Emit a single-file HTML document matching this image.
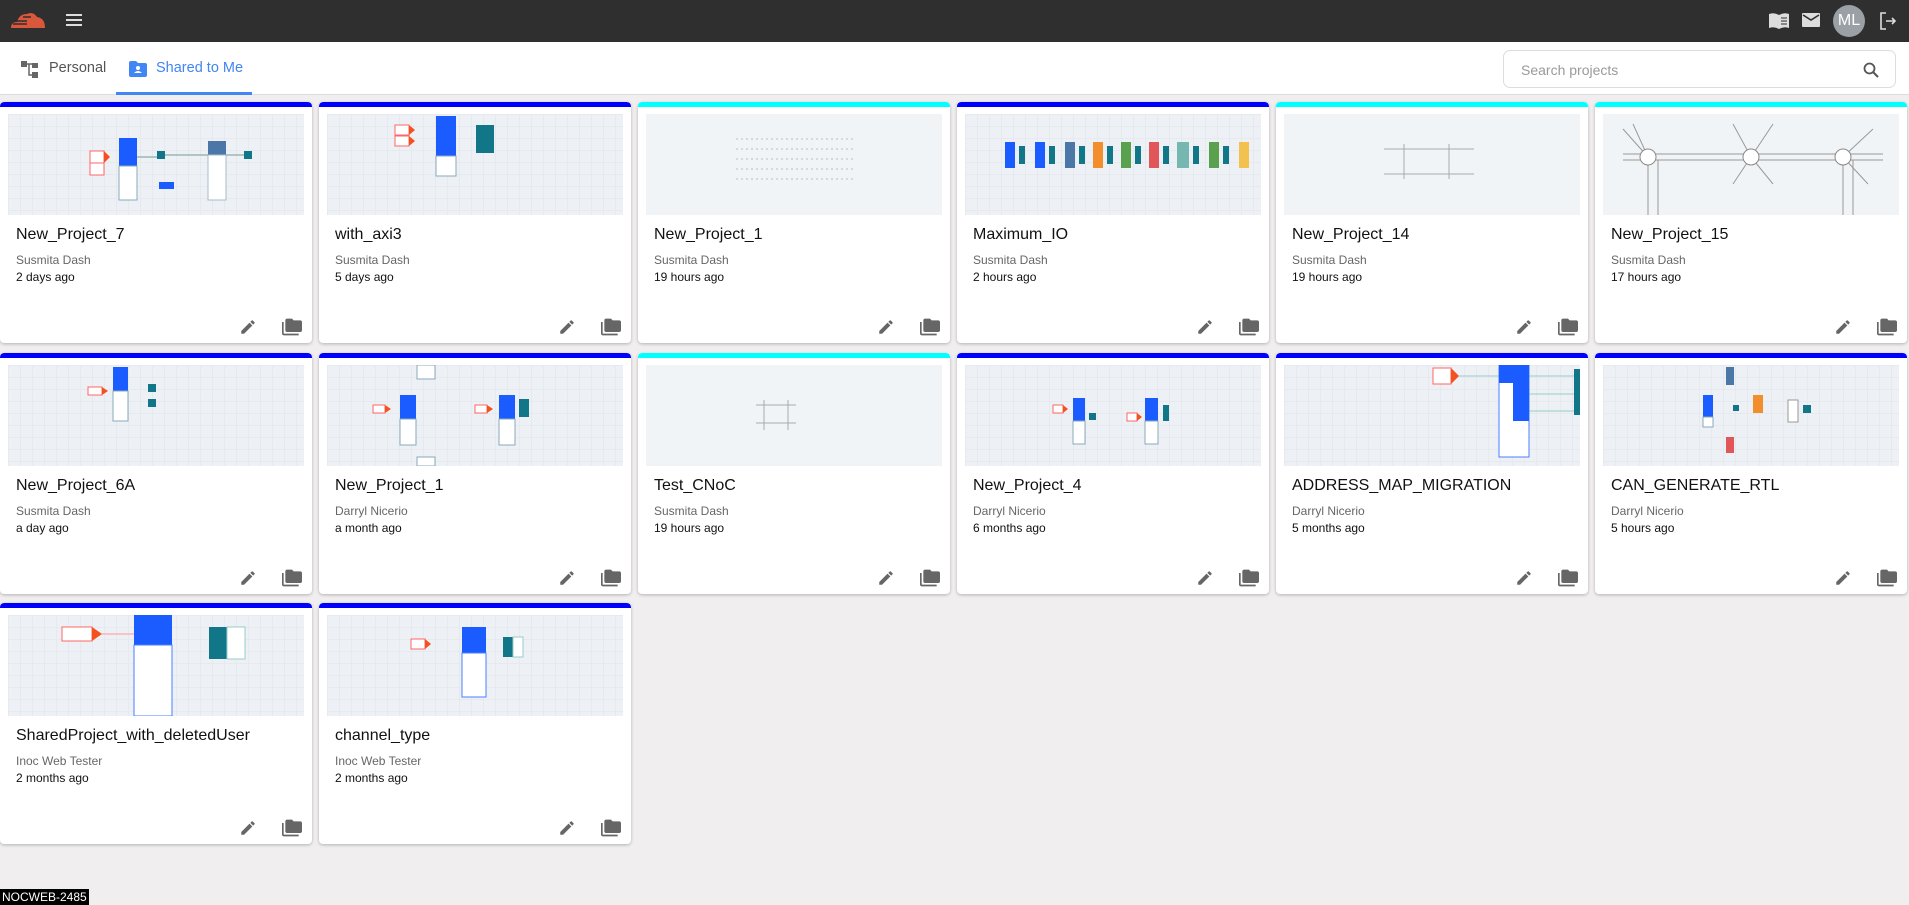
<!DOCTYPE html>
<html><head><meta charset="utf-8"><style>
*{box-sizing:border-box;margin:0;padding:0}
body{width:1909px;height:905px;overflow:hidden;background:#f0eeee;font-family:"Liberation Sans",Arial,sans-serif;position:relative}
.top{position:absolute;left:0;top:0;width:1909px;height:42px;background:#2f2f2f}
.tabs{position:absolute;left:0;top:42px;width:1909px;height:53px;background:#fff;border-bottom:1px solid #ddd}
.tab{position:absolute;top:18px;font-size:14.5px;color:#555}
.card{position:absolute;width:312px;height:241px;background:#fff;border-radius:4px;box-shadow:0 1px 3px rgba(0,0,0,.25);overflow:hidden}
.bar{position:absolute;left:0;top:0;right:0;height:5px;border-radius:4px 4px 0 0}
.b{background:#0000ff}.c{background:#00ffff}
.th{position:absolute;left:8px;top:12px;width:296px;height:101px;background:#edf0f4;background-image:linear-gradient(#e6e9ee 1px,transparent 1px),linear-gradient(90deg,#e6e9ee 1px,transparent 1px);background-size:12px 12px}
.th svg{position:absolute;left:0;top:0}
.t{position:absolute;left:16px;top:124px;font-size:16px;color:#111}
.a{position:absolute;left:16px;top:151px;font-size:12px;color:#666}
.d{position:absolute;left:16px;top:168px;font-size:12px;color:#111}
</style></head><body>
<div class="top">
<svg style="position:absolute;left:9px;top:10px" width="38" height="20" viewBox="0 0 38 20"><path d="M2 18 Q2 12 8 12 Q10 4 18 4 Q24 1 28 7 Q36 8 36 18 Z" fill="#d9573a"/><path d="M4 14h14M6 11h12M14 7h8" stroke="#2f2f2f" stroke-width="1.5"/></svg>
<svg style="position:absolute;left:66px;top:13px" width="16" height="14"><path d="M0 2h16M0 7h16M0 12h16" stroke="#ddd" stroke-width="2"/></svg>
<svg style="position:absolute;left:1768px;top:12px" width="22" height="18" viewBox="0 0 22 18"><path d="M1 2q5-2 10 1q5-3 10-1v14q-5-2-10 1q-5-3-10-1z" fill="#ddd"/><path d="M13 6h6M13 9h6M13 12h6" stroke="#2f2f2f" stroke-width="1"/></svg>
<svg style="position:absolute;left:1802px;top:13px" width="18" height="14"><rect width="18" height="14" rx="1" fill="#ddd"/><path d="M1 2l8 5 8-5" stroke="#2f2f2f" stroke-width="1.6" fill="none"/></svg>
<div style="position:absolute;left:1833px;top:5px;width:32px;height:32px;border-radius:50%;background:#9aa0a6;color:#fff;font-size:16px;line-height:32px;text-align:center">ML</div>
<svg style="position:absolute;left:1879px;top:12px" width="18" height="18"><path d="M7 1H2v16h5M7 9h9M13 6l3 3-3 3" stroke="#ddd" stroke-width="1.6" fill="none"/></svg>
</div>
<div class="tabs">
<svg style="position:absolute;left:21px;top:19px" width="19" height="17"><rect x="0" y="0" width="6" height="6" fill="#666"/><rect x="11" y="2" width="6" height="5" fill="#666"/><rect x="11" y="11" width="6" height="6" fill="#666"/><path d="M6 3h5M8 3v11h3" stroke="#666" stroke-width="1.5" fill="none"/></svg>
<div class="tab" style="left:49px">Personal</div>
<svg style="position:absolute;left:129px;top:19px" width="18" height="16"><path d="M0 2q0-2 2-2h5l2 2h7q2 0 2 2v10q0 2-2 2H2q-2 0-2-2z" fill="#4285f4"/><circle cx="9" cy="7" r="2" fill="#fff"/><path d="M5 12q4-4 8 0z" fill="#fff"/></svg>
<div class="tab" style="left:156px;color:#4285f4">Shared to Me</div>
<div style="position:absolute;left:116px;top:50px;width:136px;height:3px;background:#4285f4"></div>
<div style="position:absolute;left:1503px;top:8px;width:393px;height:38px;border:1px solid #ddd;border-radius:7px;background:#fff">
<span style="position:absolute;left:17px;top:11px;font-size:14px;color:#9a9a9a">Search projects</span>
<svg style="position:absolute;right:16px;top:11px" width="16" height="16"><circle cx="6.5" cy="6.5" r="5" stroke="#555" stroke-width="1.8" fill="none"/><path d="M10 10l5 5" stroke="#555" stroke-width="2"/></svg>
</div>
</div>

<div class="card" style="left:0;top:102px"><div class="bar b"></div><div class="th"><svg width="296" height="101"><rect x="82" y="37" width="14" height="14" fill="#fff" stroke="#f66"/><path d="M96 37l6 6-6 6z" fill="#f4511e"/><rect x="82" y="49" width="14" height="12" fill="#fff" stroke="#f66"/><rect x="111" y="24" width="18" height="28" fill="#1a5cff"/><rect x="111" y="52" width="18" height="34" fill="#fff" stroke="#8ab"/><rect x="149" y="37" width="8" height="8" fill="#178"/><rect x="200" y="27" width="18" height="14" fill="#4a76a8"/><rect x="200" y="41" width="18" height="45" fill="#fff" stroke="#abc"/><rect x="236" y="37" width="8" height="8" fill="#178"/><rect x="151" y="68" width="15" height="7" fill="#1a5cff"/><path d="M129 43h20M157 41h43M218 41h18" stroke="#799" /></svg></div><div class="t">New_Project_7</div><div class="a">Susmita Dash</div><div class="d">2 days ago</div></div>
<div class="card" style="left:319px;top:102px"><div class="bar b"></div><div class="th"><svg width="296" height="101"><rect x="68" y="11" width="14" height="10" fill="#fff" stroke="#f66"/><path d="M82 11l6 5-6 5z" fill="#f4511e"/><rect x="68" y="22" width="14" height="10" fill="#fff" stroke="#f66"/><path d="M82 22l6 5-6 5z" fill="#f4511e"/><rect x="109" y="2" width="20" height="40" fill="#1a5cff"/><rect x="109" y="42" width="20" height="20" fill="#fff" stroke="#8ab"/><rect x="149" y="11" width="18" height="28" fill="#178"/></svg></div><div class="t">with_axi3</div><div class="a">Susmita Dash</div><div class="d">5 days ago</div></div>
<div class="card" style="left:638px;top:102px"><div class="bar c"></div><div class="th" style="background:#f1f4f7"><svg width="296" height="101"><g stroke="#bbb" stroke-dasharray="2 3"><path d="M90 25h120M90 35h120M90 45h120M90 55h120M90 65h120"/></g></svg></div><div class="t">New_Project_1</div><div class="a">Susmita Dash</div><div class="d">19 hours ago</div></div>
<div class="card" style="left:957px;top:102px"><div class="bar b"></div><div class="th"><svg width="296" height="101"><rect x="40" y="28" width="10" height="26" fill="#1a5cff"/><rect x="54" y="32" width="6" height="18" fill="#178"/><rect x="70" y="28" width="10" height="26" fill="#1a5cff"/><rect x="84" y="32" width="6" height="18" fill="#178"/><rect x="100" y="28" width="10" height="26" fill="#4a76a8"/><rect x="114" y="32" width="6" height="18" fill="#178"/><rect x="128" y="28" width="10" height="26" fill="#f28e2b"/><rect x="142" y="32" width="6" height="18" fill="#178"/><rect x="156" y="28" width="10" height="26" fill="#59a14f"/><rect x="170" y="32" width="6" height="18" fill="#178"/><rect x="184" y="28" width="10" height="26" fill="#e15759"/><rect x="198" y="32" width="6" height="18" fill="#178"/><rect x="212" y="28" width="12" height="26" fill="#76b7b2"/><rect x="228" y="32" width="6" height="18" fill="#178"/><rect x="244" y="28" width="10" height="26" fill="#59a14f"/><rect x="258" y="32" width="6" height="18" fill="#178"/><rect x="274" y="28" width="10" height="26" fill="#f2c14e"/></svg></div><div class="t">Maximum_IO</div><div class="a">Susmita Dash</div><div class="d">2 hours ago</div></div>
<div class="card" style="left:1276px;top:102px"><div class="bar c"></div><div class="th" style="background:#f1f4f7"><svg width="296" height="101"><g stroke="#aaa" fill="none"><path d="M100 35h90M100 60h90M120 30v35M165 30v35"/></g></svg></div><div class="t">New_Project_14</div><div class="a">Susmita Dash</div><div class="d">19 hours ago</div></div>
<div class="card" style="left:1595px;top:102px"><div class="bar c"></div><div class="th" style="background:#f1f4f7"><svg width="296" height="101"><g stroke="#999" fill="none"><path d="M20 40h260M20 46h260M45 46v55M55 46v55M240 46v55M250 46v55"/><path d="M45 43L20 15M45 43L30 10M240 43L270 15M240 43L265 70M148 43L130 10M148 43L170 10M148 43L130 70M148 43L170 70"/></g><circle cx="45" cy="43" r="8" fill="#fff" stroke="#888"/><circle cx="148" cy="43" r="8" fill="#fff" stroke="#888"/><circle cx="240" cy="43" r="8" fill="#fff" stroke="#888"/></svg></div><div class="t">New_Project_15</div><div class="a">Susmita Dash</div><div class="d">17 hours ago</div></div>

<div class="card" style="left:0;top:353px"><div class="bar b"></div><div class="th"><svg width="296" height="101"><rect x="80" y="22" width="14" height="8" fill="#fff" stroke="#f66"/><path d="M94 22l6 4-6 4z" fill="#f4511e"/><rect x="105" y="2" width="15" height="24" fill="#1a5cff"/><rect x="105" y="26" width="15" height="30" fill="#fff" stroke="#8ab"/><rect x="140" y="19" width="8" height="8" fill="#178"/><rect x="140" y="34" width="8" height="8" fill="#178"/></svg></div><div class="t">New_Project_6A</div><div class="a">Susmita Dash</div><div class="d">a day ago</div></div>
<div class="card" style="left:319px;top:353px"><div class="bar b"></div><div class="th"><svg width="296" height="101"><rect x="90" y="0" width="18" height="14" fill="#fff" stroke="#8ab"/><rect x="90" y="92" width="18" height="9" fill="#fff" stroke="#8ab"/><rect x="46" y="40" width="12" height="8" fill="#fff" stroke="#f66"/><path d="M58 40l6 4-6 4z" fill="#f4511e"/><rect x="73" y="30" width="16" height="24" fill="#1a5cff"/><rect x="73" y="54" width="16" height="26" fill="#fff" stroke="#8ab"/><rect x="148" y="40" width="12" height="8" fill="#fff" stroke="#f66"/><path d="M160 40l6 4-6 4z" fill="#f4511e"/><rect x="172" y="30" width="16" height="24" fill="#1a5cff"/><rect x="172" y="54" width="16" height="26" fill="#fff" stroke="#8ab"/><rect x="192" y="34" width="10" height="18" fill="#178"/></svg></div><div class="t">New_Project_1</div><div class="a">Darryl Nicerio</div><div class="d">a month ago</div></div>
<div class="card" style="left:638px;top:353px"><div class="bar c"></div><div class="th" style="background:#f1f4f7"><svg width="296" height="101"><g stroke="#aaa" fill="none"><path d="M110 40h40M110 58h40M118 35v30M142 35v30"/></g></svg></div><div class="t">Test_CNoC</div><div class="a">Susmita Dash</div><div class="d">19 hours ago</div></div>
<div class="card" style="left:957px;top:353px"><div class="bar b"></div><div class="th"><svg width="296" height="101"><rect x="88" y="40" width="10" height="8" fill="#fff" stroke="#f66"/><path d="M98 40l5 4-5 4z" fill="#f4511e"/><rect x="108" y="33" width="12" height="23" fill="#1a5cff"/><rect x="108" y="56" width="12" height="23" fill="#fff" stroke="#8ab"/><rect x="124" y="48" width="7" height="7" fill="#178"/><rect x="162" y="48" width="10" height="8" fill="#fff" stroke="#f66"/><path d="M172 48l5 4-5 4z" fill="#f4511e"/><rect x="180" y="33" width="13" height="23" fill="#1a5cff"/><rect x="180" y="56" width="13" height="23" fill="#fff" stroke="#8ab"/><rect x="198" y="40" width="6" height="16" fill="#178"/></svg></div><div class="t">New_Project_4</div><div class="a">Darryl Nicerio</div><div class="d">6 months ago</div></div>
<div class="card" style="left:1276px;top:353px"><div class="bar b"></div><div class="th"><svg width="296" height="101"><rect x="149" y="3" width="18" height="16" fill="#fff" stroke="#f66"/><path d="M167 3l8 8-8 8z" fill="#f4511e"/><path d="M175 11h40M244 11h50M244 29h50M244 46h50" stroke="#9cc"/><rect x="215" y="0" width="30" height="92" fill="#fff" stroke="#4a7eff"/><rect x="229" y="0" width="16" height="56" fill="#1a5cff"/><rect x="215" y="0" width="14" height="18" fill="#1a5cff"/><rect x="290" y="4" width="6" height="46" fill="#178"/></svg></div><div class="t">ADDRESS_MAP_MIGRATION</div><div class="a">Darryl Nicerio</div><div class="d">5 months ago</div></div>
<div class="card" style="left:1595px;top:353px"><div class="bar b"></div><div class="th"><svg width="296" height="101"><rect x="100" y="30" width="10" height="22" fill="#1a5cff"/><rect x="100" y="52" width="10" height="10" fill="#fff" stroke="#8ab"/><rect x="123" y="2" width="8" height="18" fill="#4a76a8"/><rect x="150" y="30" width="10" height="18" fill="#f28e2b"/><rect x="123" y="72" width="8" height="16" fill="#e15759"/><rect x="185" y="35" width="10" height="22" fill="#fff" stroke="#999"/><rect x="200" y="40" width="8" height="8" fill="#178"/><rect x="130" y="40" width="6" height="6" fill="#178"/></svg></div><div class="t">CAN_GENERATE_RTL</div><div class="a">Darryl Nicerio</div><div class="d">5 hours ago</div></div>

<div class="card" style="left:0;top:603px"><div class="bar b"></div><div class="th"><svg width="296" height="101"><rect x="54" y="12" width="30" height="14" fill="#fff" stroke="#f66"/><path d="M84 12l10 7-10 7z" fill="#f4511e"/><path d="M94 19h42" stroke="#f99"/><rect x="126" y="0" width="38" height="30" fill="#1a5cff"/><rect x="126" y="30" width="38" height="71" fill="#fff" stroke="#4a7eff"/><rect x="201" y="12" width="18" height="32" fill="#178"/><rect x="219" y="12" width="18" height="32" fill="#fff" stroke="#9cc"/></svg></div><div class="t">SharedProject_with_deletedUser</div><div class="a">Inoc Web Tester</div><div class="d">2 months ago</div></div>
<div class="card" style="left:319px;top:603px"><div class="bar b"></div><div class="th"><svg width="296" height="101"><rect x="84" y="24" width="14" height="10" fill="#fff" stroke="#f66"/><path d="M98 24l6 5-6 5z" fill="#f4511e"/><rect x="135" y="12" width="24" height="26" fill="#1a5cff"/><rect x="135" y="38" width="24" height="44" fill="#fff" stroke="#4a7eff"/><rect x="176" y="22" width="10" height="20" fill="#178"/><rect x="186" y="22" width="10" height="20" fill="#fff" stroke="#9cc"/></svg></div><div class="t">channel_type</div><div class="a">Inoc Web Tester</div><div class="d">2 months ago</div></div>

<div id="icons"></div>
<script>
var pos=[[0,102],[319,102],[638,102],[957,102],[1276,102],[1595,102],[0,353],[319,353],[638,353],[957,353],[1276,353],[1595,353],[0,603],[319,603]];
var h='';pos.forEach(function(p){
h+='<svg style="position:absolute;left:'+(p[0]+239)+'px;top:'+(p[1]+216)+'px" width="18" height="18" viewBox="0 0 24 24"><path d="M3 17.25V21h3.75L17.8 9.94l-3.75-3.75L3 17.25zM20.7 7.04a1 1 0 000-1.41l-2.34-2.34a1 1 0 00-1.41 0l-1.83 1.830 3.75 3.75 1.83-1.83z" fill="#666"/></svg>';
h+='<svg style="position:absolute;left:'+(p[0]+282)+'px;top:'+(p[1]+215)+'px" width="20" height="20" viewBox="0 0 24 24"><path d="M2 6H0v14c0 1.1.9 2 2 2h18v-2H2V6zm20-2h-8l-2-2H6c-1.1 0-2 .9-2 2v12c0 1.1.9 2 2 2h16c1.1 0 2-.9 2-2V6c0-1.1-.9-2-2-2z" fill="#666"/></svg>';
});document.getElementById('icons').innerHTML=h;
</script>
<div style="position:absolute;left:0;top:889px;height:16px;padding:0 2px;background:#000;color:#fff;font-size:12px;line-height:16px">NOCWEB-2485</div>
</body></html>
